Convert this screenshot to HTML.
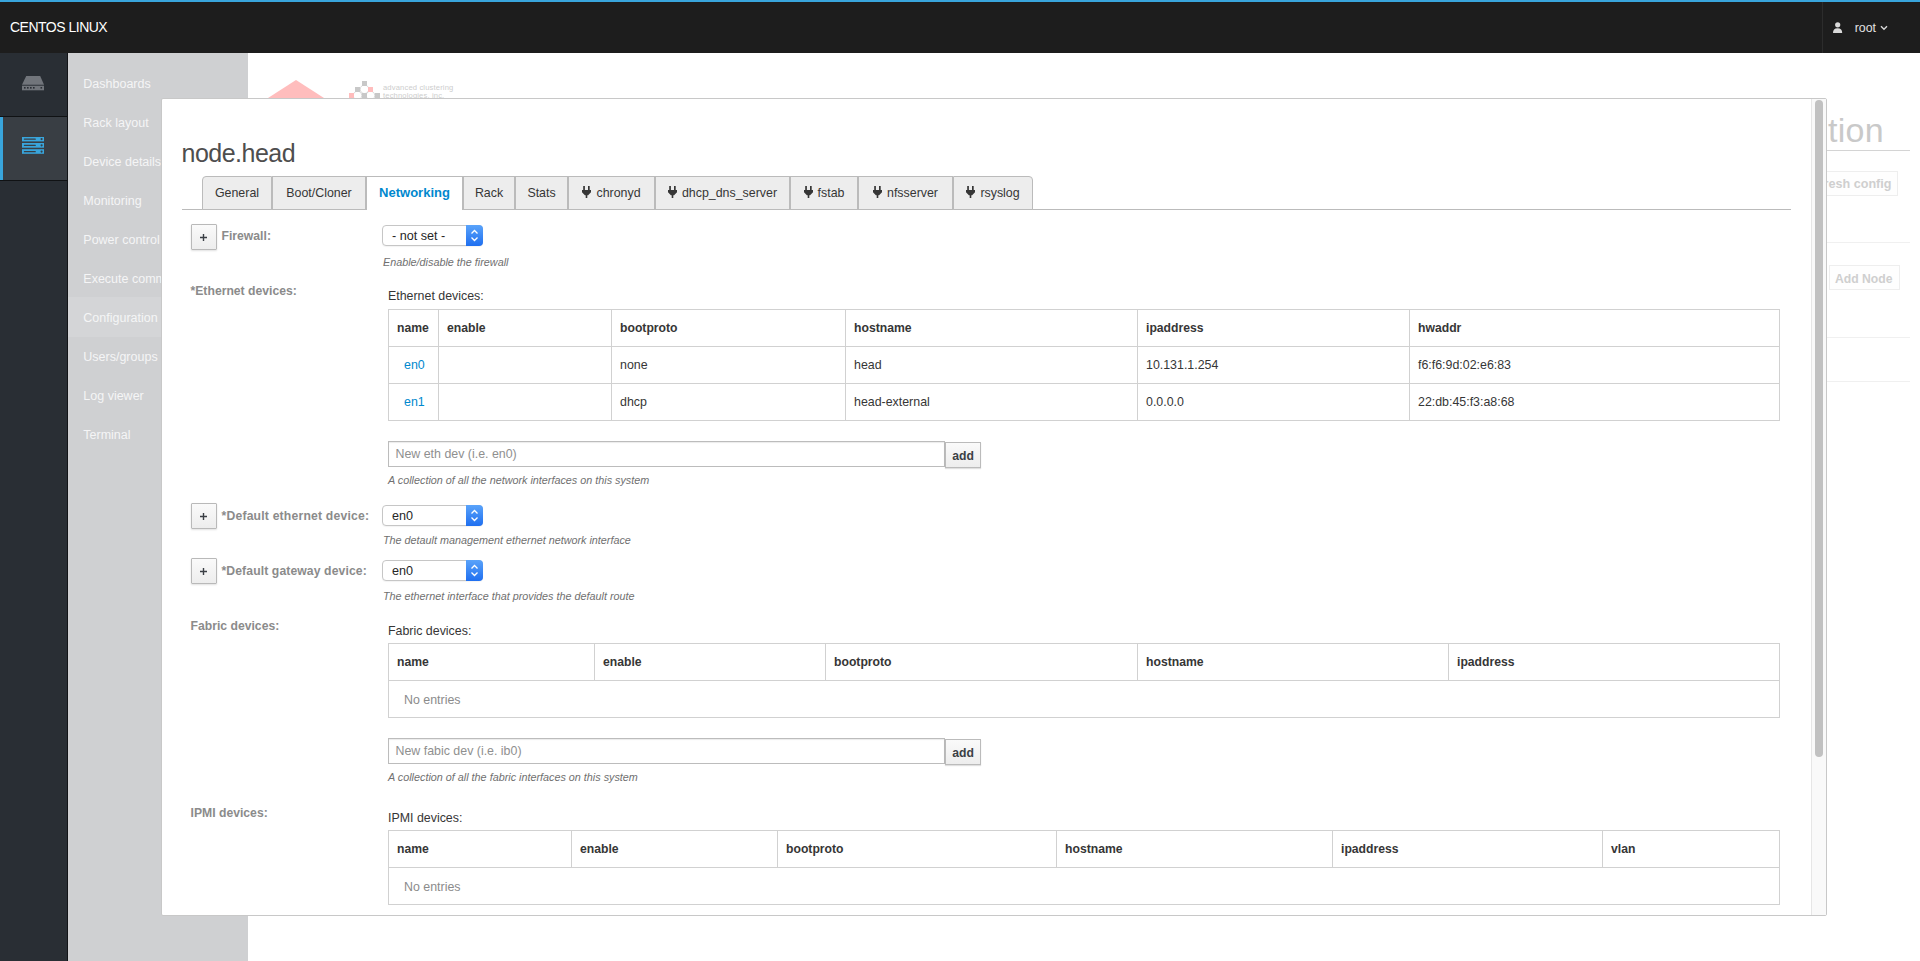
<!DOCTYPE html>
<html><head><meta charset="utf-8"><style>
*{box-sizing:border-box;margin:0;padding:0}
html,body{width:1920px;height:961px;overflow:hidden;background:#fff;font-family:"Liberation Sans",sans-serif;position:relative}
.a{position:absolute}
.t{position:absolute;white-space:nowrap;line-height:1}
</style></head><body>
<div class="a" style="left:0px;top:0px;width:1920px;height:2px;background:#39a5dc"></div>
<div class="a" style="left:0px;top:2px;width:1920px;height:51px;background:#1d1d1d"></div>
<div class="t" style="left:10px;top:20.15px;font-size:14px;color:#ffffff;font-weight:400;font-style:normal;letter-spacing:-0.5px;">CENTOS LINUX</div>
<div class="a" style="left:1822px;top:2px;width:1px;height:51px;background:#2c2c2c"></div>
<svg class="a" style="left:1832px;top:21px" width="12" height="13" viewBox="0 0 12 13"><circle cx="5.7" cy="3.8" r="2.6" fill="#d9d9d9"/><path d="M1 12 C1 9.2 2.4 7.3 5.6 7.3 C8.8 7.3 10.2 9.2 10.2 12 Z" fill="#d9d9d9"/></svg>
<div class="t" style="left:1854.7px;top:21.70px;font-size:12.4px;color:#e2e2e2;font-weight:400;font-style:normal;">root</div>
<svg class="a" style="left:1880px;top:25px" width="8" height="6" viewBox="0 0 8 6"><path d="M1 1.3 L4 4.3 L7 1.3" stroke="#d8d8d8" stroke-width="1.4" fill="none"/></svg>
<div class="a" style="left:0px;top:53px;width:67px;height:908px;background:#292e34"></div>
<div class="a" style="left:67px;top:53px;width:1px;height:908px;background:#121417"></div>
<div class="a" style="left:0px;top:116px;width:67px;height:1px;background:#101214"></div>
<div class="a" style="left:0px;top:117px;width:67px;height:63px;background:#393e44"></div>
<div class="a" style="left:0px;top:180px;width:67px;height:1px;background:#101214"></div>
<div class="a" style="left:0px;top:117px;width:3px;height:63px;background:#39a5dc"></div>
<svg class="a" style="left:22px;top:76px" width="22" height="15" viewBox="0 0 22 15"><path d="M4.2 0 L18.2 0 L22 8.8 L0 8.8 Z" fill="#71757b"/><rect x="0" y="9.7" width="22" height="4.6" fill="#71757b"/><g fill="#292e34"><rect x="2" y="11" width="1.6" height="1.6"/><rect x="5" y="11" width="1.6" height="1.6"/><rect x="8" y="11" width="1.6" height="1.6"/><rect x="11" y="11" width="1.6" height="1.6"/><rect x="18.5" y="11" width="1.6" height="1.6"/></g></svg>
<svg class="a" style="left:22px;top:137px" width="22" height="18" viewBox="0 0 22 18"><g fill="#39a5dc"><rect x="0" y="-0.2" width="22" height="4.6"/><rect x="0" y="6" width="22" height="4.7"/><rect x="0" y="12.2" width="22" height="4.6"/></g><g fill="#393e44"><rect x="1.8" y="1.5" width="12" height="1.3" rx="0.5"/><rect x="1.8" y="7.7" width="12" height="1.3" rx="0.5"/><rect x="1.8" y="13.9" width="12" height="1.3" rx="0.5"/><circle cx="19.6" cy="2.1" r="1.1"/><circle cx="19.6" cy="8.35" r="1.1"/><circle cx="19.6" cy="14.55" r="1.1"/></g></svg>
<div class="a" style="left:68px;top:53px;width:180px;height:908px;background:#cfd0d2"></div>
<div class="a" style="left:68px;top:297px;width:180px;height:40px;background:#d4d5d7"></div>
<div class="t" style="left:83.3px;top:78.42px;font-size:12.5px;color:#f5f5f6;font-weight:400;font-style:normal;">Dashboards</div>
<div class="t" style="left:83.3px;top:117.42px;font-size:12.5px;color:#f5f5f6;font-weight:400;font-style:normal;">Rack layout</div>
<div class="t" style="left:83.3px;top:156.42px;font-size:12.5px;color:#f5f5f6;font-weight:400;font-style:normal;">Device details</div>
<div class="t" style="left:83.3px;top:195.42px;font-size:12.5px;color:#f5f5f6;font-weight:400;font-style:normal;">Monitoring</div>
<div class="t" style="left:83.3px;top:234.42px;font-size:12.5px;color:#f5f5f6;font-weight:400;font-style:normal;">Power control</div>
<div class="t" style="left:83.3px;top:273.42px;font-size:12.5px;color:#f5f5f6;font-weight:400;font-style:normal;">Execute commands</div>
<div class="t" style="left:83.3px;top:312.42px;font-size:12.5px;color:#f5f5f6;font-weight:400;font-style:normal;">Configuration</div>
<div class="t" style="left:83.3px;top:351.42px;font-size:12.5px;color:#f5f5f6;font-weight:400;font-style:normal;">Users/groups</div>
<div class="t" style="left:83.3px;top:390.42px;font-size:12.5px;color:#f5f5f6;font-weight:400;font-style:normal;">Log viewer</div>
<div class="t" style="left:83.3px;top:429.42px;font-size:12.5px;color:#f5f5f6;font-weight:400;font-style:normal;">Terminal</div>
<svg class="a" style="left:268px;top:80px" width="56" height="18" viewBox="0 0 56 18"><path d="M0 18 L28 0 L56 18 Z" fill="#ffbdbd"/></svg>
<svg class="a" style="left:345px;top:78px" width="40" height="20" viewBox="345 78 40 20"><g fill="none" stroke="#d2d2d2" stroke-width="0.9"><circle cx="364.5" cy="89.3" r="4.3"/><circle cx="357.5" cy="95.5" r="4.3"/><circle cx="370.5" cy="95.5" r="4.3"/></g></svg>
<div class="a" style="left:362px;top:81px;width:5px;height:5px;background:#c8c8c8"></div>
<div class="a" style="left:355px;top:87px;width:5px;height:5px;background:#c8c8c8"></div>
<div class="a" style="left:368px;top:87px;width:5px;height:5px;background:#ffbdbd"></div>
<div class="a" style="left:349px;top:93px;width:5px;height:5px;background:#ffbdbd"></div>
<div class="a" style="left:362px;top:93px;width:5px;height:5px;background:#c8c8c8"></div>
<div class="a" style="left:375px;top:93px;width:5px;height:5px;background:#c8c8c8"></div>
<div class="t" style="left:383px;top:83.57px;font-size:7.6px;color:#cdcdcd;font-weight:400;font-style:normal;letter-spacing:0.15px;">advanced clustering</div>
<div class="t" style="left:383px;top:92.07px;font-size:7.6px;color:#cdcdcd;font-weight:400;font-style:normal;letter-spacing:0.15px;">technologies, inc.</div>
<div class="t" style="right:36px;top:112.92px;font-size:34px;color:#c9c9c9;font-weight:400;font-style:normal;letter-spacing:0.3px;">tion</div>
<div class="a" style="left:1826px;top:150px;width:84px;height:1px;background:#d4d4d4"></div>
<div class="a" style="left:1800px;top:171px;width:98px;height:25px;border:1px solid #eeeeee;background:#fefefe"></div>
<div class="t" style="right:28.5px;top:178.33px;font-size:12.6px;color:#cfcfcf;font-weight:700;font-style:normal;">Refresh config</div>
<div class="a" style="left:1826px;top:242px;width:84px;height:1px;background:#f0f0f0"></div>
<div class="a" style="left:1829px;top:265px;width:71px;height:25px;border:1px solid #eeeeee;background:#fefefe"></div>
<div class="t" style="right:27.5px;top:272.97px;font-size:12.2px;color:#cfcfcf;font-weight:700;font-style:normal;">Add Node</div>
<div class="a" style="left:1826px;top:337px;width:84px;height:1px;background:#f0f0f0"></div>
<div class="a" style="left:1826px;top:381px;width:84px;height:1px;background:#f0f0f0"></div>
<div class="a" style="left:161px;top:98px;width:1666px;height:818px;background:#fff;border:1px solid #c8c8c8;border-radius:2px"></div>
<div class="t" style="left:181.5px;top:141.14px;font-size:25px;color:#4e4e4e;font-weight:400;font-style:normal;letter-spacing:-0.5px;">node.head</div>
<div class="a" style="left:182px;top:209px;width:1609px;height:1px;background:#bbbbbb"></div>
<div class="a" style="left:202px;top:176px;width:70px;height:34px;background:#ededed;border:1px solid #bbbbbb;border-top-left-radius:4px;"></div>
<div class="t" style="left:202px;width:70px;text-align:center;top:187.00px;font-size:12.4px;color:#363636;font-weight:400">General</div>
<div class="a" style="left:272px;top:176px;width:94px;height:34px;background:#ededed;border:1px solid #bbbbbb;"></div>
<div class="t" style="left:272px;width:94px;text-align:center;top:187.00px;font-size:12.4px;color:#363636;font-weight:400">Boot/Cloner</div>
<div class="a" style="left:366px;top:176px;width:97px;height:34px;background:#ffffff;border:1px solid #bbbbbb;border-bottom:none;"></div>
<div class="t" style="left:366px;width:97px;text-align:center;top:185.50px;font-size:13px;color:#0088ce;font-weight:700">Networking</div>
<div class="a" style="left:463px;top:176px;width:52px;height:34px;background:#ededed;border:1px solid #bbbbbb;"></div>
<div class="t" style="left:463px;width:52px;text-align:center;top:187.00px;font-size:12.4px;color:#363636;font-weight:400">Rack</div>
<div class="a" style="left:515px;top:176px;width:53px;height:34px;background:#ededed;border:1px solid #bbbbbb;"></div>
<div class="t" style="left:515px;width:53px;text-align:center;top:187.00px;font-size:12.4px;color:#363636;font-weight:400">Stats</div>
<div class="a" style="left:568px;top:176px;width:87px;height:34px;background:#ededed;border:1px solid #bbbbbb;"></div>
<div class="t" style="left:568px;width:87px;text-align:center;top:187.00px;font-size:12.4px;color:#363636;font-weight:400"><svg width="9" height="12" viewBox="0 0 9 12" style="margin-right:5px;vertical-align:-1px;margin-top:-6px"><path d="M1.2 0H2.9V4H1.2Z M6 0H7.7V4H6Z M0 4H9V6.2L6.1 9.2H5.3V12H3.7V9.2H2.9L0 6.2Z" fill="#363636"/></svg>chronyd</div>
<div class="a" style="left:655px;top:176px;width:135px;height:34px;background:#ededed;border:1px solid #bbbbbb;"></div>
<div class="t" style="left:655px;width:135px;text-align:center;top:187.00px;font-size:12.4px;color:#363636;font-weight:400"><svg width="9" height="12" viewBox="0 0 9 12" style="margin-right:5px;vertical-align:-1px;margin-top:-6px"><path d="M1.2 0H2.9V4H1.2Z M6 0H7.7V4H6Z M0 4H9V6.2L6.1 9.2H5.3V12H3.7V9.2H2.9L0 6.2Z" fill="#363636"/></svg>dhcp_dns_server</div>
<div class="a" style="left:790px;top:176px;width:68px;height:34px;background:#ededed;border:1px solid #bbbbbb;"></div>
<div class="t" style="left:790px;width:68px;text-align:center;top:187.00px;font-size:12.4px;color:#363636;font-weight:400"><svg width="9" height="12" viewBox="0 0 9 12" style="margin-right:5px;vertical-align:-1px;margin-top:-6px"><path d="M1.2 0H2.9V4H1.2Z M6 0H7.7V4H6Z M0 4H9V6.2L6.1 9.2H5.3V12H3.7V9.2H2.9L0 6.2Z" fill="#363636"/></svg>fstab</div>
<div class="a" style="left:858px;top:176px;width:95px;height:34px;background:#ededed;border:1px solid #bbbbbb;"></div>
<div class="t" style="left:858px;width:95px;text-align:center;top:187.00px;font-size:12.4px;color:#363636;font-weight:400"><svg width="9" height="12" viewBox="0 0 9 12" style="margin-right:5px;vertical-align:-1px;margin-top:-6px"><path d="M1.2 0H2.9V4H1.2Z M6 0H7.7V4H6Z M0 4H9V6.2L6.1 9.2H5.3V12H3.7V9.2H2.9L0 6.2Z" fill="#363636"/></svg>nfsserver</div>
<div class="a" style="left:953px;top:176px;width:80px;height:34px;background:#ededed;border:1px solid #bbbbbb;border-top-right-radius:4px;"></div>
<div class="t" style="left:953px;width:80px;text-align:center;top:187.00px;font-size:12.4px;color:#363636;font-weight:400"><svg width="9" height="12" viewBox="0 0 9 12" style="margin-right:5px;vertical-align:-1px;margin-top:-6px"><path d="M1.2 0H2.9V4H1.2Z M6 0H7.7V4H6Z M0 4H9V6.2L6.1 9.2H5.3V12H3.7V9.2H2.9L0 6.2Z" fill="#363636"/></svg>rsyslog</div>
<div class="a" style="left:191px;top:224px;width:26px;height:26px;border:1px solid #b9b9b9;border-radius:1px;background:linear-gradient(#fafafa,#ededed);box-shadow:0 1px 2px rgba(0,0,0,.12)"></div>
<svg class="a" style="left:200px;top:234px" width="7" height="7" viewBox="0 0 7 7"><path d="M3.5 0V7M0 3.5H7" stroke="#3b3f45" stroke-width="1.4"/></svg>
<div class="t" style="left:221.5px;top:230.17px;font-size:12.2px;color:#8b8b8b;font-weight:700;font-style:normal;">Firewall:</div>
<div class="a" style="left:382px;top:225px;width:101px;height:21px;border:1px solid #c6c6c6;border-radius:4px;background:#fff;box-shadow:0 1px 1px rgba(0,0,0,.05)"></div>
<div class="a" style="left:466px;top:225px;width:17px;height:21px;border-radius:0 4px 4px 0;background:linear-gradient(#5aa3fa,#1f6ff0)"></div>
<svg class="a" style="left:470px;top:229px" width="9" height="13" viewBox="0 0 9 13"><path d="M1.5 4.5L4.5 1.5L7.5 4.5M1.5 8.5L4.5 11.5L7.5 8.5" stroke="#fff" stroke-width="1.3" fill="none"/></svg>
<div class="t" style="left:392px;top:229.83px;font-size:12.6px;color:#262626;font-weight:400;font-style:normal;">- not set -</div>
<div class="t" style="left:383px;top:256.86px;font-size:10.8px;color:#707070;font-weight:400;font-style:italic;">Enable/disable the firewall</div>
<div class="t" style="left:190.5px;top:284.67px;font-size:12.2px;color:#8b8b8b;font-weight:700;font-style:normal;">*Ethernet devices:</div>
<div class="t" style="left:388px;top:289.50px;font-size:12.4px;color:#363636;font-weight:400;font-style:normal;">Ethernet devices:</div>
<div class="a" style="left:388px;top:309px;width:1392px;height:38px;border:1px solid #d1d1d1"></div>
<div class="a" style="left:438px;top:309px;width:1px;height:37px;background:#d1d1d1"></div>
<div class="a" style="left:611px;top:309px;width:1px;height:37px;background:#d1d1d1"></div>
<div class="a" style="left:845px;top:309px;width:1px;height:37px;background:#d1d1d1"></div>
<div class="a" style="left:1137px;top:309px;width:1px;height:37px;background:#d1d1d1"></div>
<div class="a" style="left:1409px;top:309px;width:1px;height:37px;background:#d1d1d1"></div>
<div class="t" style="left:397px;top:322.17px;font-size:12.2px;color:#363636;font-weight:700;font-style:normal;">name</div>
<div class="t" style="left:447px;top:322.17px;font-size:12.2px;color:#363636;font-weight:700;font-style:normal;">enable</div>
<div class="t" style="left:620px;top:322.17px;font-size:12.2px;color:#363636;font-weight:700;font-style:normal;">bootproto</div>
<div class="t" style="left:854px;top:322.17px;font-size:12.2px;color:#363636;font-weight:700;font-style:normal;">hostname</div>
<div class="t" style="left:1146px;top:322.17px;font-size:12.2px;color:#363636;font-weight:700;font-style:normal;">ipaddress</div>
<div class="t" style="left:1418px;top:322.17px;font-size:12.2px;color:#363636;font-weight:700;font-style:normal;">hwaddr</div>
<div class="a" style="left:388px;top:346px;width:1392px;height:1px;background:#d1d1d1"></div>
<div class="a" style="left:388px;top:383px;width:1392px;height:1px;background:#d1d1d1"></div>
<div class="a" style="left:438px;top:309px;width:1px;height:112px;background:#d1d1d1"></div>
<div class="a" style="left:611px;top:309px;width:1px;height:112px;background:#d1d1d1"></div>
<div class="a" style="left:845px;top:309px;width:1px;height:112px;background:#d1d1d1"></div>
<div class="a" style="left:1137px;top:309px;width:1px;height:112px;background:#d1d1d1"></div>
<div class="a" style="left:1409px;top:309px;width:1px;height:112px;background:#d1d1d1"></div>
<div class="a" style="left:388px;top:309px;width:1px;height:112px;background:#d1d1d1"></div>
<div class="a" style="left:1779px;top:309px;width:1px;height:112px;background:#d1d1d1"></div>
<div class="a" style="left:388px;top:420px;width:1392px;height:1px;background:#d1d1d1"></div>
<div class="t" style="left:404px;top:358.50px;font-size:12.4px;color:#0088ce;font-weight:400;font-style:normal;">en0</div>
<div class="t" style="left:620px;top:358.50px;font-size:12.4px;color:#363636;font-weight:400;font-style:normal;">none</div>
<div class="t" style="left:854px;top:358.50px;font-size:12.4px;color:#363636;font-weight:400;font-style:normal;">head</div>
<div class="t" style="left:1146px;top:358.50px;font-size:12.4px;color:#363636;font-weight:400;font-style:normal;">10.131.1.254</div>
<div class="t" style="left:1418px;top:358.50px;font-size:12.4px;color:#363636;font-weight:400;font-style:normal;">f6:f6:9d:02:e6:83</div>
<div class="t" style="left:404px;top:395.50px;font-size:12.4px;color:#0088ce;font-weight:400;font-style:normal;">en1</div>
<div class="t" style="left:620px;top:395.50px;font-size:12.4px;color:#363636;font-weight:400;font-style:normal;">dhcp</div>
<div class="t" style="left:854px;top:395.50px;font-size:12.4px;color:#363636;font-weight:400;font-style:normal;">head-external</div>
<div class="t" style="left:1146px;top:395.50px;font-size:12.4px;color:#363636;font-weight:400;font-style:normal;">0.0.0.0</div>
<div class="t" style="left:1418px;top:395.50px;font-size:12.4px;color:#363636;font-weight:400;font-style:normal;">22:db:45:f3:a8:68</div>
<div class="a" style="left:388px;top:441px;width:557px;height:26px;border:1px solid #bcbcbc;background:#fff;box-shadow:inset 0 1px 1px rgba(0,0,0,.08)"></div>
<div class="t" style="left:395.5px;top:447.50px;font-size:12.4px;color:#8f8f8f;font-weight:400;font-style:normal;">New eth dev (i.e. en0)</div>
<div class="a" style="left:945px;top:442px;width:36px;height:26px;border:1px solid #bbbbbb;background:linear-gradient(#fafafa,#ededed);box-shadow:0 1px 1px rgba(0,0,0,.12)"></div>
<div class="t" style="left:952.3px;top:449.67px;font-size:12.2px;color:#3b3f45;font-weight:700;font-style:normal;">add</div>
<div class="t" style="left:388px;top:474.86px;font-size:10.8px;color:#707070;font-weight:400;font-style:italic;">A collection of all the network interfaces on this system</div>
<div class="a" style="left:191px;top:503px;width:26px;height:26px;border:1px solid #b9b9b9;border-radius:1px;background:linear-gradient(#fafafa,#ededed);box-shadow:0 1px 2px rgba(0,0,0,.12)"></div>
<svg class="a" style="left:200px;top:513px" width="7" height="7" viewBox="0 0 7 7"><path d="M3.5 0V7M0 3.5H7" stroke="#3b3f45" stroke-width="1.4"/></svg>
<div class="t" style="left:221.5px;top:509.67px;font-size:12.2px;color:#8b8b8b;font-weight:700;font-style:normal;letter-spacing:0.19px;">*Default ethernet device:</div>
<div class="a" style="left:382px;top:505px;width:101px;height:21px;border:1px solid #c6c6c6;border-radius:4px;background:#fff;box-shadow:0 1px 1px rgba(0,0,0,.05)"></div>
<div class="a" style="left:466px;top:505px;width:17px;height:21px;border-radius:0 4px 4px 0;background:linear-gradient(#5aa3fa,#1f6ff0)"></div>
<svg class="a" style="left:470px;top:509px" width="9" height="13" viewBox="0 0 9 13"><path d="M1.5 4.5L4.5 1.5L7.5 4.5M1.5 8.5L4.5 11.5L7.5 8.5" stroke="#fff" stroke-width="1.3" fill="none"/></svg>
<div class="t" style="left:392px;top:509.83px;font-size:12.6px;color:#262626;font-weight:400;font-style:normal;">en0</div>
<div class="t" style="left:383px;top:534.86px;font-size:10.8px;color:#707070;font-weight:400;font-style:italic;">The detault management ethernet network interface</div>
<div class="a" style="left:191px;top:558px;width:26px;height:26px;border:1px solid #b9b9b9;border-radius:1px;background:linear-gradient(#fafafa,#ededed);box-shadow:0 1px 2px rgba(0,0,0,.12)"></div>
<svg class="a" style="left:200px;top:568px" width="7" height="7" viewBox="0 0 7 7"><path d="M3.5 0V7M0 3.5H7" stroke="#3b3f45" stroke-width="1.4"/></svg>
<div class="t" style="left:221.5px;top:564.67px;font-size:12.2px;color:#8b8b8b;font-weight:700;font-style:normal;letter-spacing:0.1px;">*Default gateway device:</div>
<div class="a" style="left:382px;top:560px;width:101px;height:21px;border:1px solid #c6c6c6;border-radius:4px;background:#fff;box-shadow:0 1px 1px rgba(0,0,0,.05)"></div>
<div class="a" style="left:466px;top:560px;width:17px;height:21px;border-radius:0 4px 4px 0;background:linear-gradient(#5aa3fa,#1f6ff0)"></div>
<svg class="a" style="left:470px;top:564px" width="9" height="13" viewBox="0 0 9 13"><path d="M1.5 4.5L4.5 1.5L7.5 4.5M1.5 8.5L4.5 11.5L7.5 8.5" stroke="#fff" stroke-width="1.3" fill="none"/></svg>
<div class="t" style="left:392px;top:564.83px;font-size:12.6px;color:#262626;font-weight:400;font-style:normal;">en0</div>
<div class="t" style="left:383px;top:590.86px;font-size:10.8px;color:#707070;font-weight:400;font-style:italic;">The ethernet interface that provides the default route</div>
<div class="t" style="left:190.5px;top:619.67px;font-size:12.2px;color:#8b8b8b;font-weight:700;font-style:normal;">Fabric devices:</div>
<div class="t" style="left:388px;top:624.50px;font-size:12.4px;color:#363636;font-weight:400;font-style:normal;">Fabric devices:</div>
<div class="a" style="left:388px;top:643px;width:1392px;height:75px;border:1px solid #d1d1d1"></div>
<div class="a" style="left:388px;top:680px;width:1392px;height:1px;background:#d1d1d1"></div>
<div class="a" style="left:594px;top:643px;width:1px;height:37px;background:#d1d1d1"></div>
<div class="a" style="left:825px;top:643px;width:1px;height:37px;background:#d1d1d1"></div>
<div class="a" style="left:1137px;top:643px;width:1px;height:37px;background:#d1d1d1"></div>
<div class="a" style="left:1448px;top:643px;width:1px;height:37px;background:#d1d1d1"></div>
<div class="t" style="left:397px;top:656.17px;font-size:12.2px;color:#363636;font-weight:700;font-style:normal;">name</div>
<div class="t" style="left:603px;top:656.17px;font-size:12.2px;color:#363636;font-weight:700;font-style:normal;">enable</div>
<div class="t" style="left:834px;top:656.17px;font-size:12.2px;color:#363636;font-weight:700;font-style:normal;">bootproto</div>
<div class="t" style="left:1146px;top:656.17px;font-size:12.2px;color:#363636;font-weight:700;font-style:normal;">hostname</div>
<div class="t" style="left:1457px;top:656.17px;font-size:12.2px;color:#363636;font-weight:700;font-style:normal;">ipaddress</div>
<div class="t" style="left:404px;top:693.50px;font-size:12.4px;color:#8b8b8b;font-weight:400;font-style:normal;">No entries</div>
<div class="a" style="left:388px;top:738px;width:557px;height:26px;border:1px solid #bcbcbc;background:#fff;box-shadow:inset 0 1px 1px rgba(0,0,0,.08)"></div>
<div class="t" style="left:395.5px;top:744.50px;font-size:12.4px;color:#8f8f8f;font-weight:400;font-style:normal;">New fabic dev (i.e. ib0)</div>
<div class="a" style="left:945px;top:739px;width:36px;height:26px;border:1px solid #bbbbbb;background:linear-gradient(#fafafa,#ededed);box-shadow:0 1px 1px rgba(0,0,0,.12)"></div>
<div class="t" style="left:952.3px;top:746.67px;font-size:12.2px;color:#3b3f45;font-weight:700;font-style:normal;">add</div>
<div class="t" style="left:388px;top:771.86px;font-size:10.8px;color:#707070;font-weight:400;font-style:italic;">A collection of all the fabric interfaces on this system</div>
<div class="t" style="left:190.5px;top:806.67px;font-size:12.2px;color:#8b8b8b;font-weight:700;font-style:normal;">IPMI devices:</div>
<div class="t" style="left:388px;top:811.50px;font-size:12.4px;color:#363636;font-weight:400;font-style:normal;">IPMI devices:</div>
<div class="a" style="left:388px;top:830px;width:1392px;height:75px;border:1px solid #d1d1d1"></div>
<div class="a" style="left:388px;top:867px;width:1392px;height:1px;background:#d1d1d1"></div>
<div class="a" style="left:571px;top:830px;width:1px;height:37px;background:#d1d1d1"></div>
<div class="a" style="left:777px;top:830px;width:1px;height:37px;background:#d1d1d1"></div>
<div class="a" style="left:1056px;top:830px;width:1px;height:37px;background:#d1d1d1"></div>
<div class="a" style="left:1332px;top:830px;width:1px;height:37px;background:#d1d1d1"></div>
<div class="a" style="left:1602px;top:830px;width:1px;height:37px;background:#d1d1d1"></div>
<div class="t" style="left:397px;top:843.17px;font-size:12.2px;color:#363636;font-weight:700;font-style:normal;">name</div>
<div class="t" style="left:580px;top:843.17px;font-size:12.2px;color:#363636;font-weight:700;font-style:normal;">enable</div>
<div class="t" style="left:786px;top:843.17px;font-size:12.2px;color:#363636;font-weight:700;font-style:normal;">bootproto</div>
<div class="t" style="left:1065px;top:843.17px;font-size:12.2px;color:#363636;font-weight:700;font-style:normal;">hostname</div>
<div class="t" style="left:1341px;top:843.17px;font-size:12.2px;color:#363636;font-weight:700;font-style:normal;">ipaddress</div>
<div class="t" style="left:1611px;top:843.17px;font-size:12.2px;color:#363636;font-weight:700;font-style:normal;">vlan</div>
<div class="t" style="left:404px;top:880.50px;font-size:12.4px;color:#8b8b8b;font-weight:400;font-style:normal;">No entries</div>
<div class="a" style="left:1811px;top:99px;width:15px;height:816px;background:#f9f9f9;border-left:1px solid #e6e6e6"></div>
<div class="a" style="left:1815px;top:100px;width:8px;height:657px;background:#c1c1c1;border-radius:4px"></div>
</body></html>
